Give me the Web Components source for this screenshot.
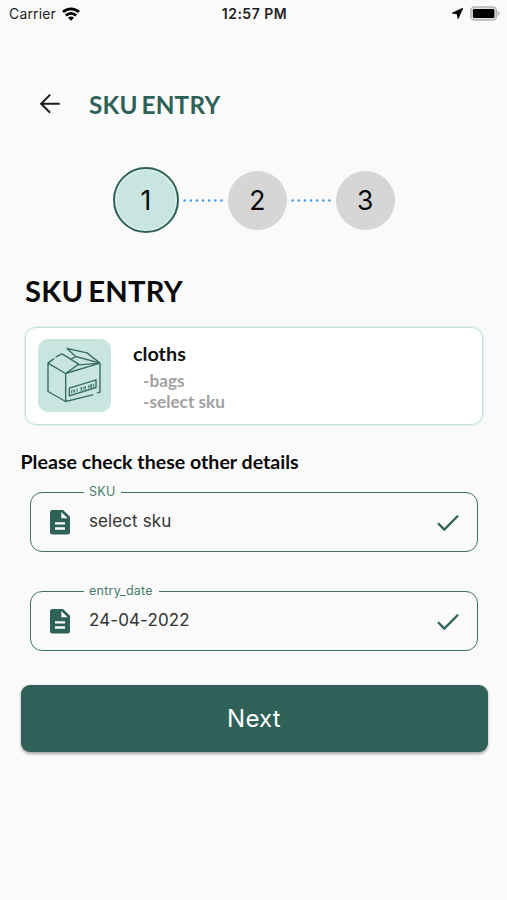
<!DOCTYPE html>
<html lang="en">
<head>
<meta charset="utf-8">
<title>SKU Entry</title>
<style>
html,body{margin:0;height:100%;background:#fafafa}
body{font-family:Inter,"Liberation Sans",sans-serif;color:#111;overflow:hidden}
</style>
</head>
<body>
<sku-page></sku-page>
<script>
function define(name, html) {
  const t = document.createElement('template');
  t.innerHTML = html;
  customElements.define(name, class extends HTMLElement {
    constructor() {
      super();
      this.attachShadow({mode: 'open'}).append(t.content.cloneNode(true));
    }
  });
}

define('status-bar', `
<style>
:host{display:grid;grid-template-columns:1fr auto 1fr;align-items:center;height:27px;padding:0 7px 0 9px;box-sizing:border-box;color:#222}
.left,.right{display:flex;align-items:center}
.left{font-size:14px;letter-spacing:.15px;gap:6px}
.right{justify-content:flex-end;gap:7px}
.time{font-size:14px;font-weight:600;letter-spacing:.5px}
svg{display:block}
</style>
<div class="left"><span>Carrier</span>
<svg width="18" height="14" viewBox="0 0 18 14" fill="none" stroke="#000" stroke-width="2.8"><path d="M1 5.1C5.5.8 12.5.8 17 5.1M3.8 8.5c3-2.9 7.400-2.9 10.400 0"/><path d="M6 10.700c1.800-1.600 4.200-1.600 6 0L9 13.800z" fill="#000" stroke="none"/></svg></div>
<span class="time">12:57 PM</span>
<div class="right">
<svg width="11" height="11" viewBox="0 0 11 11"><path d="M10.700.3 6.100 10.600 5.300 5.900.4 5.100z" fill="#000" stroke="#000" stroke-width=".9" stroke-linejoin="round"/></svg>
<svg width="30" height="15" viewBox="0 0 30 15"><rect x=".9" y=".9" width="25.500" height="13.200" rx="3.600" fill="#e0e0e0" stroke="#b5b5b5" stroke-width="1.500"/><rect x="2.900" y="2.900" width="21.500" height="9.200" rx="1.300"/><path d="M27.600 5v5q2-.8 2-2.500T27.600 5" fill="#b5b5b5"/></svg>
</div>`);

define('title-bar', `
<style>
:host{display:flex;align-items:center;height:40px;margin-top:57px;padding-left:39px;color:#2e6157;font:700 24.300px/40px Lato,sans-serif;letter-spacing:.2px;word-spacing:-2.200px}
svg{display:block;margin-right:28px}
span{position:relative;top:.5px}
</style>
<svg width="22" height="22" viewBox="0 0 22 22" fill="none" stroke="#1c1c1c" stroke-width="2"><path d="M20.800 10.700H2.500M11.200 1.600 2.100 10.700l9.100 9.100"/></svg>
<span><slot></slot></span>`);

define('step-dot', `
<style>
:host{display:flex;align-items:center;justify-content:center;width:59px;height:59px;border-radius:50%;background:#d6d6d6;color:#0a0a0a;font-size:26.500px;line-height:1;flex:none}
:host([active]){box-sizing:border-box;width:66px;height:66px;background:#c8e6df;border:2px solid #2e6157;box-shadow:inset 0 0 0 1.200px #e4f3ef}
</style><slot></slot>`);

define('step-link', `
<style>:host{display:block;width:40px;height:4px;flex:none}svg{display:block}</style>
<svg width="40" height="4"><path d="M1.600 2.500h38" stroke="#3e9bea" stroke-width="2.600" stroke-linecap="round" stroke-dasharray="0 6.150"/></svg>`);

define('step-bar', `
<style>:host{display:flex;align-items:center;height:66px;margin-top:43px;padding-left:113px;gap:4.400px}</style><slot></slot>`);

define('box-icon', `
<style>:host{display:block;width:73px;height:73px;border-radius:10px;background:#c8e6df;flex:none}svg{display:block}</style>
<svg width="73" height="73" viewBox="-18 -13.500 219 219" fill="none" stroke="#3b6d63" stroke-width="4.200" stroke-linejoin="round" stroke-linecap="round">
<path d="M12 59V144L65 174 146 154M65 174V90L12 59 29 46M36 40 54 31 104 62 65 90 168 59V146L160 148M69 15 129 28 168 59 95 39zM95 39 82 47M168 59 106 64"/>
<path d="M76 134 156 109V132L76 157z"/>
<path d="M83 141v8M87 140l4 7v-8M99 136v8M110 133l4 8M114 132l-3 9M120 130v8M124 129v8M134 126v8M139 125v7h4v-8zM149 122v8" stroke-width="2.800"/>
</svg>`);

define('item-card', `
<style>
:host{display:flex;box-sizing:border-box;margin:17px 24.500px 0 25px;height:98px;border:1px solid #c3e4db;outline:.5px solid #dceee9;border-radius:11px;background:#fff;padding:11px 12px;font-family:Lato,sans-serif;font-weight:700}
.text{margin-left:22px;padding-top:2px}
.name{font-size:19.800px;line-height:24px;color:#111}
.notes{padding:4.500px 0 0 10px;font-size:17.200px;line-height:21px;color:#a1a1a1}
</style>
<box-icon></box-icon>
<div class="text"><div class="name"><slot></slot></div><div class="notes"><slot name="notes"></slot></div></div>`);

define('outlined-field', `
<style>
:host{display:block;margin:0 29.500px 0 30px;height:68px}
fieldset{box-sizing:border-box;height:68px;margin:0;min-width:0;border:1px solid #3f7265;border-radius:12px;padding:0 17px 0 18px}
legend{margin-left:35px;padding:0 6px 0 5px;font-size:12.500px;line-height:16px;height:16px;color:#477b6e;letter-spacing:.25px}
.row{display:flex;align-items:center;height:45px}
.value{flex:1;margin:-4px 0 0 18px;font-size:17px;line-height:24px;color:#333;letter-spacing:.1px}
svg{display:block;flex:none}
</style>
<fieldset><legend><slot name="label"></slot></legend>
<div class="row">
<svg width="22" height="25" viewBox="0 0 22 25"><path d="M3.300 0H14l7 6.800v15.400q0 2.300-2.300 2.300H3.300Q1 24.500 1 22.200V2.300Q1 0 3.300 0" fill="#2e6157"/><path d="M12.300 2v6.300h6.300z" fill="#fafafa"/><path d="M6 13.300h10M6 18.500h10" stroke="#fafafa" stroke-width="2.300"/></svg>
<span class="value"><slot></slot></span>
<svg width="23" height="18" viewBox="0 0 23 18"><path d="M1 9.300 7.300 15.600 21 1.800" fill="none" stroke="#2e6157" stroke-width="2.300"/></svg>
</div></fieldset>`);

define('main-button', `
<style>
:host{display:block;margin:33.500px 19.500px 0 20.500px}
button{display:block;width:100%;height:67px;border:0;border-radius:9px;background:#2f6158;color:#fff;font:400 24px/68px Inter,sans-serif;letter-spacing:.2px;padding:0;box-shadow:0 1.500px 3px #0005}
</style><button><slot></slot></button>`);

define('sku-page', `
<style>
:host{display:block;width:507px;height:900px;background:#fafafa}
h1{margin:38px 0 0 25px;font:700 29.200px/39px Lato,sans-serif;color:#0a0a0a;letter-spacing:.25px;word-spacing:-2.500px}
h2{margin:25px 0 0 20.500px;font:700 19.600px/24px Lato,sans-serif;color:#0a0a0a}
.fields{display:grid;gap:31px;margin-top:10px}
</style>
<status-bar></status-bar>
<title-bar>SKU ENTRY</title-bar>
<step-bar><step-dot active>1</step-dot><step-link></step-link><step-dot>2</step-dot><step-link></step-link><step-dot>3</step-dot></step-bar>
<h1>SKU ENTRY</h1>
<item-card>cloths<div slot="notes">-bags</div><div slot="notes">-select sku</div></item-card>
<h2>Please check these other details</h2>
<div class="fields">
<outlined-field><span slot="label">SKU</span>select sku</outlined-field>
<outlined-field><span slot="label">entry_date</span>24-04-2022</outlined-field>
</div>
<main-button>Next</main-button>`);
</script>
</body>
</html>
